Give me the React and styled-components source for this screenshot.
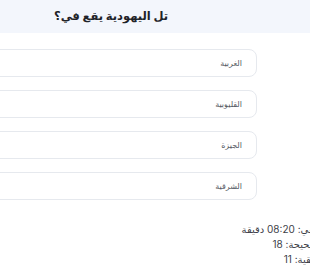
import React from 'react';
import styled, { createGlobalStyle } from 'styled-components';

const GlobalStyle = createGlobalStyle`
  html, body {
    margin: 0;
    padding: 0;
    background: #ffffff;
    overflow: hidden;
  }
  body {
    font-family: "Inter", "Noto Sans", "DejaVu Sans", sans-serif;
  }
`;

// page frame, right-to-left quiz view
const Page = styled.div`
  direction: rtl;
  width: 310px;
  height: 280px;
  overflow: hidden;
  background: #ffffff;
`;

const Header = styled.header`
  height: 33px;
  background: #f3f6fc;
  display: flex;
  align-items: center;
  padding-right: 142px;
`;

const Title = styled.h2`
  margin: 0 0 2px;
  font-size: 11.5px;
  font-weight: 700;
  color: #1f2328;
`;

const Options = styled.div`
  display: flex;
  flex-direction: column;
  gap: 13px;
  margin: 16px 53px 0 -30px;
`;

const Option = styled.button`
  all: unset;
  box-sizing: border-box;
  height: 28px;
  display: flex;
  align-items: center;
  padding: 0 14px;
  border: 1px solid #e6e9ee;
  border-radius: 8px;
  background: #ffffff;
  font-size: 8px;
  color: #555a63;
  font-family: inherit;
`;

const Stats = styled.div`
  margin: 23px -50px 0 0;
  display: flex;
  flex-direction: column;
  gap: 2px;
`;

const Stat = styled.div`
  font-size: 10px;
  line-height: 13px;
  color: #3d4148;
`;

const options = ['الغربية', 'القليوبية', 'الجيزة', 'الشرقية'];

export default function App() {
  return (
    <>
      <GlobalStyle />
      <Page>
        <Header>
          <Title>تل اليهودية يقع في؟</Title>
        </Header>
        <Options>
          {options.map((o) => (
            <Option key={o}>{o}</Option>
          ))}
        </Options>
        <Stats>
          <Stat>الوقت المتبقي: 08:20 دقيقة</Stat>
          <Stat>الإجابات الصحيحة: 18</Stat>
          <Stat>الأسئلة المتبقية: 11</Stat>
        </Stats>
      </Page>
    </>
  );
}
